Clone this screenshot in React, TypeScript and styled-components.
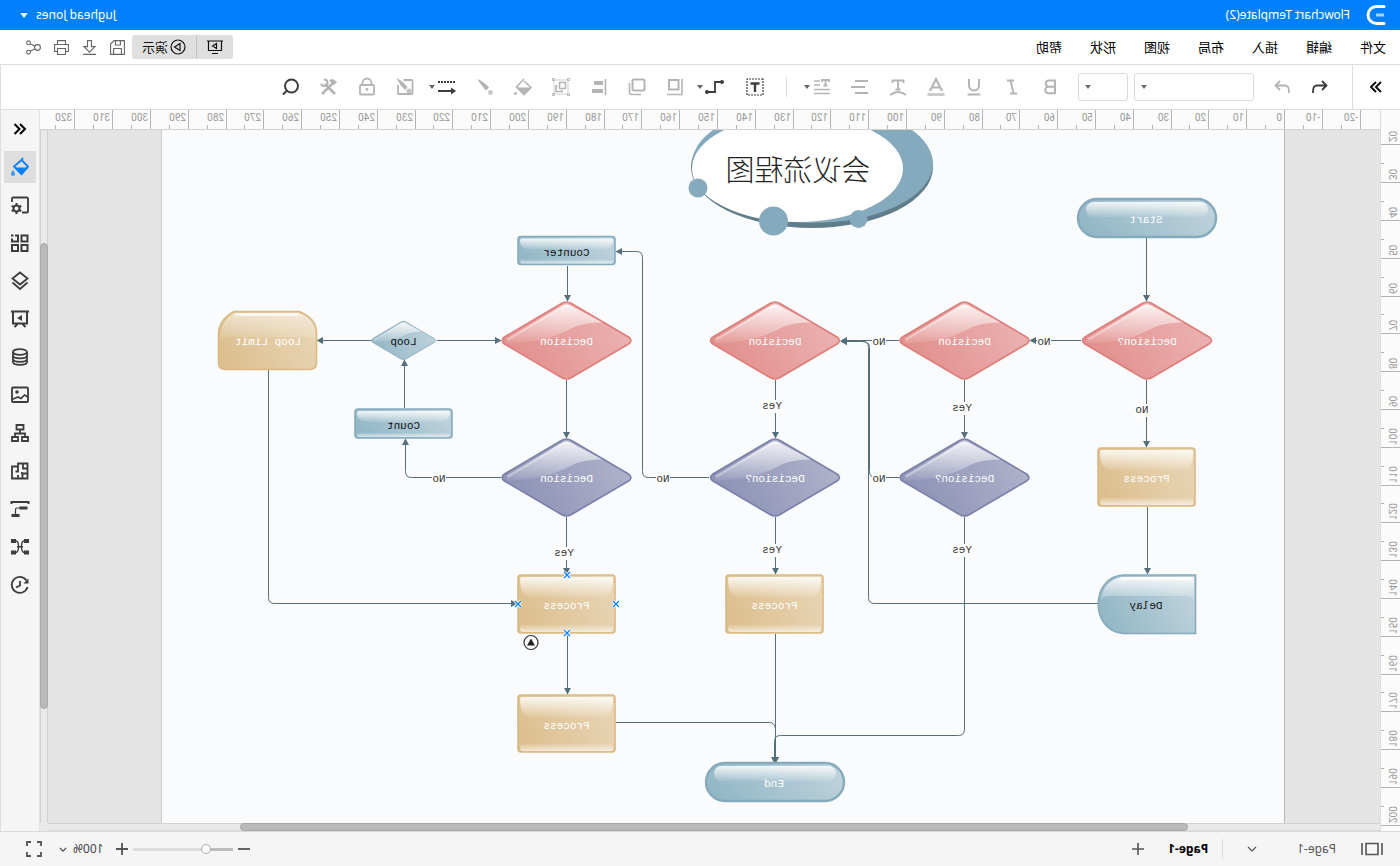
import React from "react";
import styled, { createGlobalStyle } from "styled-components";

const GlobalStyle = createGlobalStyle`
  *, *::before, *::after { box-sizing: border-box; }
  html, body { margin: 0; padding: 0; }
  body { font-family: "Noto Sans", "Noto Sans CJK SC", sans-serif; font-size: 12px; color: #111; overflow: hidden; }
  button, select, input { font: inherit; color: inherit; margin: 0; padding: 0; }
  button { border: 0; background: none; }
  svg { display: block; flex: none; }
`;

/* The whole workspace is shown as in a mirror. */
const Shell = styled.div`
  display: flex;
  flex-direction: column;
  height: 100vh;
  background: #fff;
  transform: scaleX(-1);
`;

const TitleBar = styled.header`
  display: flex;
  align-items: center;
  height: 30px;
  padding: 0 20px 0 14px;
  background: #0080ff;
  color: #fff;
`;

const DocName = styled.h1`
  margin: 0 auto 0 16px;
  font-size: 12px;
  line-height: 18px;
  font-weight: 400;
`;

const UserButton = styled.button`
  display: flex;
  align-items: center;
  gap: 8px;
  line-height: 18px;
`;

const MenuBar = styled.nav`
  display: flex;
  align-items: center;
  height: 35px;
  padding: 0 24px 0 14px;
  border-bottom: 1px solid #dedede;
`;

const MenuList = styled.div`
  display: flex;
  gap: 28px;
  margin-right: auto;
`;

const MenuItem = styled.button`
  font-size: 13px;
  line-height: 20px;
  color: #000;
  white-space: nowrap;
`;

const PresentGroup = styled.div`
  display: flex;
  height: 24px;
  margin-right: 4px;
  border-radius: 3px;
  background: #dfdfdf;
  overflow: hidden;
`;

const PresentButton = styled.button<{ $wide?: boolean }>`
  display: flex;
  align-items: center;
  justify-content: center;
  gap: 2px;
  width: ${(p) => (p.$wide ? 65 : 36)}px;
  font-size: 13px;
  line-height: 20px;
  white-space: nowrap;
  border-left: ${(p) => (p.$wide ? "1px solid #c4c4c4" : "0")};
`;

const QuickActions = styled.div`
  display: flex;
  gap: 8px;
`;

const QuickButton = styled.button`
  display: grid;
  place-items: center;
  width: 20px;
  height: 20px;
  color: #666;
`;

const ToolBar = styled.div`
  display: flex;
  align-items: center;
  height: 45px;
  border-bottom: 1px solid #dedede;
  border-right: 1px solid #dedede;
`;

const Expander = styled.button`
  display: grid;
  place-items: center;
  width: 48px;
  height: 44px;
  border-right: 1px solid #dedede;
  color: #111;
`;

const ToolGroup = styled.div<{ $before: number; $gap?: number }>`
  display: flex;
  align-items: center;
  gap: ${(p) => p.$gap ?? 14}px;
  margin-left: ${(p) => p.$before}px;
`;

const ToolButton = styled.button<{ $on?: boolean; $menu?: boolean }>`
  display: flex;
  align-items: center;
  justify-content: flex-start;
  gap: 2px;
  width: ${(p) => (p.$menu ? 34 : 24)}px;
  height: 28px;
  padding-left: 2px;
  color: ${(p) => (p.$on ? "#3c3c3c" : "#b4b4b4")};
`;

const Divider = styled.span`
  width: 1px;
  height: 20px;
  background: #dcdcdc;
`;

const SelectBox = styled.div<{ $width: number }>`
  display: grid;
  align-items: center;
  width: ${(p) => p.$width}px;
  height: 28px;
  border: 1px solid #dadada;
  border-radius: 3px;
  background: #fff;
  > * { grid-area: 1 / 1; }
  > svg { justify-self: end; margin-right: 6px; color: #707070; pointer-events: none; }
`;

const SelectInput = styled.select`
  appearance: none;
  width: 100%;
  height: 26px;
  border: 0;
  background: transparent;
  padding: 0 20px 0 8px;
`;

const Workspace = styled.main`
  flex: 1;
  min-height: 0;
  display: grid;
  grid-template-columns: 20px minmax(0, 1fr) 40px;
  grid-template-rows: minmax(0, 1fr);
`;

const RulerColumn = styled.div`
  display: grid;
  grid-template-rows: 20px minmax(0, 1fr);
  background: #fbfbfb;
  border-right: 1px solid #dcdcdc;
  overflow: hidden;
`;

const VerticalRuler = styled.div`
  grid-row: 2;
  overflow: hidden;
`;

const HorizontalRuler = styled.div`
  background: #fbfbfb;
  border-bottom: 1px solid #d2d2d2;
  overflow: hidden;
`;

const Editor = styled.div`
  display: grid;
  grid-template-columns: minmax(0, 1fr) 8px;
  grid-template-rows: 20px minmax(0, 1fr) 8px;
  background: #e9e9e9;
  ${HorizontalRuler} { grid-column: 1 / 3; }
`;

const Canvas = styled.div`
  display: flex;
  padding-left: 95px;
  background: #e4e4e4;
  overflow: hidden;
`;

const Sheet = styled.div`
  flex: none;
  width: 1124px;
  background: #f9fbfd;
  border-left: 1px solid #b8b8b8;
  border-right: 1px solid #cacaca;
`;

const ScrollTrack = styled.div<{ $vertical?: boolean }>`
  display: grid;
  background: #e9e9e9;
  ${(p) =>
    p.$vertical
      ? "grid-template-rows: 113fr 466fr 114fr; box-shadow: inset 1px 0 #d2d2d2, inset -1px 0 #d2d2d2;"
      : "grid-template-columns: 192fr 948fr 192fr; box-shadow: inset 0 1px #d2d2d2, inset 0 -1px #dadada;"}
`;

const ScrollThumb = styled.div<{ $vertical?: boolean }>`
  ${(p) => (p.$vertical ? "grid-row: 2;" : "grid-column: 2;")}
  border: 1px solid #a8a8a8;
  border-radius: 4px;
  background: #bababa;
`;

const SideBar = styled.aside`
  display: flex;
  flex-direction: column;
  align-items: center;
  gap: 6px;
  padding-top: 3px;
  background: #f5f5f5;
  border-left: 1px solid #e2e2e2;
  border-right: 1px solid #dedede;
  overflow: hidden;
`;

const SideButton = styled.button<{ $active?: boolean }>`
  display: grid;
  place-items: center;
  flex: none;
  width: 32px;
  height: 32px;
  background: ${(p) => (p.$active ? "#dedede" : "transparent")};
  color: ${(p) => (p.$active ? "#0080ff" : "#3c3c3c")};
`;

const StatusBar = styled.footer`
  display: flex;
  align-items: center;
  justify-content: space-between;
  height: 35px;
  padding: 0 26px 0 16px;
  background: #f5f5f5;
  border-top: 1px solid #dadada;
  color: #444;
`;

const StatusGroup = styled.div<{ $gap: number }>`
  display: flex;
  align-items: center;
  gap: ${(p) => p.$gap}px;
  line-height: 18px;
`;

const PageTab = styled.button<{ $current?: boolean }>`
  display: flex;
  align-items: center;
  gap: 40px;
  color: ${(p) => (p.$current ? "#000" : "#555")};
  font-weight: ${(p) => (p.$current ? 700 : 400)};
  white-space: nowrap;
`;

const IconButton = styled.button`
  display: grid;
  place-items: center;
  color: #555;
`;

const ZoomButton = styled.button`
  display: flex;
  align-items: center;
  gap: 6px;
  margin-left: 7px;
`;

const ZoomSlider = styled.input`
  appearance: none;
  width: 100px;
  height: 12px;
  background: linear-gradient(#bcbcbc, #bcbcbc) 0 5px / 26px 3px no-repeat,
    linear-gradient(#dcdcdc, #dcdcdc) 0 5px / 100% 3px no-repeat;
  &::-webkit-slider-thumb {
    appearance: none;
    width: 10px;
    height: 10px;
    border: 1px solid #aaa;
    border-radius: 50%;
    background: #fff;
  }
`;

/* ---------- icons ---------- */

type IconProps = { w?: number; h?: number; box?: string; sw?: number; children: React.ReactNode };

const Icon = ({ w = 20, h = 20, box = "0 0 20 20", sw = 2, children }: IconProps) => (
  <svg width={w} height={h} viewBox={box} fill="none" stroke="currentColor" strokeWidth={sw} aria-hidden="true">
    {children}
  </svg>
);

const Caret = ({ wide }: { wide?: boolean }) => (
  <svg width={wide ? 8 : 6} height={wide ? 5 : 4} viewBox="0 0 6 4" aria-hidden="true">
    <path d="M0 0h6L3 4z" fill="currentColor" />
  </svg>
);

const DarkCaret = styled.span`
  color: #666;
`;

const solid = { fill: "currentColor", stroke: "none" };

const textTools: { name: string; icon: React.ReactNode; menu?: boolean }[] = [
  { name: "Bold", icon: <path d="M5 3.5h6a3 3 0 0 1 0 6.200H5zM5 9.700h6.500a3.300 3.300 0 0 1 0 6.600H5z" /> },
  { name: "Italic", icon: <path d="M8 3.500h7M5 16.500h7M11.500 3.500l-3 13" strokeWidth="1.800" /> },
  { name: "Underline", icon: <path d="M5 2v6.500a5 5 0 0 0 10 0V2M3.500 17.500h13" /> },
  {
    name: "Font colour",
    icon: (
      <>
        <path d="M4 14L10 2l6 12M6 10.500h8" />
        <path d="M1.500 17.500h17" strokeWidth="3" opacity=".7" />
      </>
    ),
  },
  { name: "Text on path", icon: <path d="M4.500 6V3.500h11V6M10 3.500V12M7.500 12.500h5M2 18q8-6 16 0" strokeWidth="1.800" /> },
  { name: "Align text", icon: <path d="M2 4h13M5 10h14M2 16h13" /> },
  {
    name: "Line spacing",
    menu: true,
    icon: (
      <>
        <path d="M3 5V3h7v2M6.500 3v6M4.500 8.500h4" strokeWidth="1.800" />
        <path d="M12 4h6M12 8h6M2 12.500h16M2 16.500h16" strokeWidth="1.500" />
      </>
    ),
  },
];

const insertTools: typeof textTools = [
  {
    name: "Text box",
    icon: (
      <>
        <rect x="2" y="2" width="16" height="16" strokeDasharray="2 1" strokeWidth="1.200" />
        <path d="M5.500 6.500h9M10 6.500V15" strokeWidth="2.400" />
      </>
    ),
  },
  {
    name: "Connector",
    menu: true,
    icon: (
      <>
        <path d="M2 5h8v10h7" strokeWidth="1.800" />
        <circle cx="3" cy="5" r="2" {...solid} />
        <circle cx="18" cy="15" r="2" {...solid} />
      </>
    ),
  },
];

const arrangeTools: typeof textTools = [
  { name: "Position", icon: <><rect x="6.500" y="3" width="9.500" height="9.500" /><path d="M3 2v15.500h15" strokeWidth="1.600" /></> },
  { name: "Order", icon: <><rect x="2.500" y="2.500" width="12" height="11" rx="1.500" /><path d="M6 17.500h9.500a2 2 0 0 0 2-2V6" strokeWidth="1.600" /></> },
  { name: "Align", icon: <><path d="M3.500 2v16" strokeWidth="1.600" /><path d="M6 6h9M6 14h11" strokeWidth="4" /></> },
  {
    name: "Group",
    icon: (
      <>
        <path d="M3 3h14v14H3z" strokeWidth="1" opacity=".6" />
        <path d="M1.500 1.500h2v2h-2zM16.500 1.500h2v2h-2zM1.500 16.500h2v2h-2zM16.500 16.500h2v2h-2z" strokeWidth="1" fill="#fff" />
        <path d="M5.500 5.500h6v6h-6zM13.500 9h1.500v5.500H9V13" strokeWidth="1.600" />
      </>
    ),
  },
  {
    name: "Fill",
    icon: (
      <>
        <path d="M9 2l7.500 8L9 17.500 2 10.500 9 4" strokeWidth="1.600" />
        <path d="M2 10.500h14.500L9 18z" {...solid} />
        <circle cx="17.500" cy="16.500" r="1.500" {...solid} />
      </>
    ),
  },
  {
    name: "Brush",
    icon: (
      <>
        <path d="M2.500 2Q3 4 11 13.500l3-3Q8 4 2.500 2z" {...solid} transform="matrix(-1 0 0 1 20 0)" />
        <circle cx="4.500" cy="15.500" r="2.500" {...solid} opacity=".7" />
      </>
    ),
  },
  {
    name: "Line style",
    menu: true,
    icon: (
      <>
        <path d="M2 5h17" strokeDasharray="2 1" />
        <path d="M4 14h15" />
        <path d="M1 14l5-3.500v7z" {...solid} />
      </>
    ),
  },
];

const moreTools: typeof textTools = [
  {
    name: "No picture",
    icon: (
      <>
        <path d="M11.500 3H3.500a1 1 0 0 0-1 1v12a1 1 0 0 0 1 1h12.500a1 1 0 0 0 1-1V8" strokeWidth="1.800" />
        <path d="M18.500 1Q12 4 7.500 10.500l2.500 2.500Q15.500 8 18.500 1z" {...solid} />
        <circle cx="6" cy="14" r="2.500" {...solid} opacity=".8" />
      </>
    ),
  },
  { name: "Lock", icon: <><rect x="3" y="8" width="14" height="9.500" rx="1" strokeWidth="1.800" /><path d="M5.500 8V6a4.500 4.500 0 0 1 9 0v2" strokeWidth="1.800" /><circle cx="10" cy="12.500" r="1.400" {...solid} /></> },
  {
    name: "Tools",
    icon: (
      <>
        <path d="M4 17L14 7M6 6l11 11" strokeWidth="2.600" />
        <path d="M2 5l4-3 4 1-3 4-2 1z" {...solid} />
        <path d="M15 2.500a3.200 3.200 0 1 0 2.800 4" strokeWidth="2" />
      </>
    ),
  },
];

const sideTools: { name: string; icon: React.ReactNode }[] = [
  {
    name: "Fill",
    icon: (
      <>
        <path d="M7 1l2 3M8.500 3L2 9.500 8.500 17 16 9.500 8.500 3" strokeWidth="1.800" />
        <path d="M1.500 10.500h14.500L8.500 18.500z" {...solid} />
        <path d="M17 13q2 3 2 4a2 2 0 0 1-4 0q0-1 2-4z" {...solid} opacity=".75" />
      </>
    ),
  },
  {
    name: "Shape settings",
    icon: (
      <>
        <path d="M8 17.500H3a1 1 0 0 1-1-1v-13a1 1 0 0 1 1-1h14a1 1 0 0 1 1 1V7" strokeWidth="1.800" />
        <circle cx="13.500" cy="13.500" r="3" strokeWidth="2" />
        <path d="M13.500 8v2M13.500 17v2M8.700 10.800l1.700 1M16.600 15.200l1.700 1M8.700 16.200l1.700-1M16.600 11.800l1.700-1" />
      </>
    ),
  },
  { name: "Symbols", icon: <><path d="M2.500 2.500h6v6h-6zM2.500 12h6v6h-6zM12 12h6v6h-6z" /><path d="M15 2.500h-3v6h6V5.500" /><path d="M16.500 2.500H19" /></> },
  { name: "Layers", icon: <path d="M10 1.500l7.500 6L10 13.500 2.500 7.500zM2.500 11.500L10 18l7.500-6.500" strokeWidth="1.800" /> },
  { name: "Slides", icon: <><path d="M1 2.500h18M3 3v11.500h14V3M7.500 15l-3 3M12.500 15l3 3" strokeWidth="2" /><path d="M8 6l5 3-5 3z" {...solid} /></> },
  { name: "Data", icon: <><ellipse cx="10" cy="5" rx="7" ry="2.800" strokeWidth="1.800" /><path d="M3 5v10c0 3.700 14 3.700 14 0V5M3 8.500c0 3.700 14 3.700 14 0M3 12c0 3.700 14 3.700 14 0" strokeWidth="1.800" /></> },
  { name: "Pictures", icon: <><rect x="2" y="2.500" width="16" height="14.500" rx="1" strokeWidth="1.800" /><circle cx="13" cy="7" r="1.800" {...solid} /><path d="M2 12l3.500-2 3.500 3.500 3-1.500 2.500 1L18 14.500" strokeWidth="1.600" /></> },
  { name: "Org chart", icon: <path d="M6.500 2h7v4.500h-7zM2 14h6v4H2zM12 14h6v4h-6zM10 6.500V10M5 13.500V10.500h10v3" strokeWidth="1.800" /> },
  { name: "Floor plan", icon: <path d="M2.500 2.500h9.500v3h6v12H2.500zM2.500 7.500h4.500v-5M12 6v4.500h2.500M8 11v2.500M2.500 12.500h5v5M12 17.500v-3.500" strokeWidth="1.800" /> },
  { name: "Gantt", icon: <><path d="M1.500 5V3h17v2" strokeWidth="2" /><path d="M2.500 9h8M10.500 16.500h8" strokeWidth="3" /><path d="M9 9h4q1.500 0 1.500 1.500V16" strokeWidth="1.200" /></> },
  { name: "Mind map", icon: <><path d="M1 4h5M14 4h5M1 15.500h5M14 15.500h5" strokeWidth="4" /><path d="M6 4q2.500 0 2.500 5.500T6 15.500M14 4q-2.500 0-2.500 5.500t2.500 6M7 9.700h6" strokeWidth="1.400" /></> },
  { name: "History", icon: <><path d="M3.500 5.500A8 8 0 1 1 2.500 12" strokeWidth="1.800" /><path d="M1.500 3.500v5h5z" {...solid} /><path d="M10 6v4.500l4 2" strokeWidth="1.800" /></> },
];

const quickTools: { name: string; icon: React.ReactNode }[] = [
  { name: "Save", icon: <path d="M.600 .600h10.400l3.400 3.400v10.400H.600zM3.600 14.400V8.500h7.800v5.900M4.600.600v4.400h5V.600" /> },
  { name: "Download", icon: <path d="M5.500 .600h4v6h3.500l-5.500 5.500-5.500-5.500h3.500zM1 14.400h13" /> },
  { name: "Print", icon: <path d="M3.500 4.500V.600h8v3.900M3.500 11.500H.600v-7h13.800v7h-2.900M3.500 8.500h8v6h-8z" /> },
  { name: "Share", icon: <><circle cx="3.500" cy="7.500" r="2.900" /><circle cx="12.500" cy="2.800" r="1.900" /><circle cx="12.500" cy="12.200" r="1.900" /><path d="M6 6.200l4.800-2.500M6 8.800l4.800 2.500" /></> },
];

/* ---------- rulers ---------- */

const PITCH = 37.8;

const TopRuler = () => (
  <svg width="100%" height="19" aria-hidden="true">
    {Array.from({ length: 35 }, (_, i) => i - 2).map((n) => {
      const x = Math.round(96 + n * PITCH);
      return (
        <g key={n}>
          <path d={`M${x - 0.5} 0V19`} stroke="#b4b4b4" />
          <path d={`M${x + 18.5} 15V19`} stroke="#b4b4b4" />
          <text x={x + 2} y="11" fontSize="10" fill="#999" fontFamily="Roboto, sans-serif">{n * 10}</text>
        </g>
      );
    })}
  </svg>
);

const LeftRuler = () => (
  <svg width="19" height="100%" aria-hidden="true">
    {Array.from({ length: 19 }, (_, i) => i + 2).map((n) => {
      const y = Math.round(90 + (n - 4) * PITCH);
      return (
        <g key={n}>
          <path d={`M0 ${y + 0.5}H19`} stroke="#b4b4b4" />
          <path d={`M16 ${y - 18.5}H19`} stroke="#b4b4b4" />
          <text transform={`translate(11 ${y - 2}) rotate(-90)`} fontSize="10" fill="#999" fontFamily="Roboto, sans-serif">{n * 10}</text>
        </g>
      );
    })}
  </svg>
);

/* ---------- diagram ---------- */

type Tone = "blue" | "red" | "violet" | "tan";

const tones: Record<Tone, { from: string; to: string; line: string }> = {
  blue: { from: "#bfd3dc", to: "#93b7c6", line: "#85aabd" },
  red: { from: "#ebb3b3", to: "#e18e8b", line: "#de7e7b" },
  violet: { from: "#b0b3cb", to: "#8c90b4", line: "#7b80a9" },
  tan: { from: "#e8d5b5", to: "#dcbf8e", line: "#dab983" },
};

const Label = styled.text`
  font-family: "Liberation Mono", monospace;
  font-size: 11px;
  text-anchor: middle;
`;

const Caption = ({ x, y, text, dark }: { x: number; y: number; text: string; dark?: boolean }) => (
  <Label x={x} y={y + 4} fill={dark ? "#111" : "#fff"}>{text}</Label>
);

const Diamond = ({ x, y, tone, text, small }: { x: number; y: number; tone: Tone; text: string; small?: boolean }) => (
  <g>
    <g transform={`translate(${x} ${y})${small ? " scale(.5)" : ""}`}>
      <path
        d="M-62-3.500L-5-37Q0-40 5-37L62-3.500Q67 0 62 3.500L5 37Q0 40-5 37L-62 3.500Q-67 0-62-3.500z"
        fill={`url(#${tone})`}
        stroke={tones[tone].line}
        strokeWidth="1.600"
      />
      <path d="M60-1L4-35Q0-37-4-35L-36-18Q-20-18-9-14Q10-4 24-1Q46 3 60 3z" fill="url(#gloss)" />
      <path d="M60-2L3-36Q0-38-3-36L-8-33Q0-34 6-31L58 0z" fill="#fff" opacity=".3" />
    </g>
    <Caption x={x} y={y} text={text} dark={small} />
  </g>
);

const Box = ({ x, y, w = 97, h = 58, tone, text, dark }: { x: number; y: number; w?: number; h?: number; tone: Tone; text: string; dark?: boolean }) => {
  const g = h > 40 ? 18 : 9;
  const foot = h > 40 ? 7 : 4;
  return (
    <g>
      <rect x={x} y={y} width={w} height={h} rx="3" fill={`url(#${tone})`} stroke={tones[tone].line} strokeWidth="1.600" />
      <path d={`M${x + 2} ${y + 4}q0-2 2-2h${w - 8}q2 0 2 2q0 ${g}-12 ${g}h${28 - w}q-12 0-12-${g}z`} fill="url(#gloss)" />
      <rect x={x + 2} y={y + h - foot - 1} width={w - 4} height={foot} rx="3" fill="url(#foot)" />
      <Caption x={x + w / 2} y={y + h / 2 + 1} text={text} dark={dark} />
    </g>
  );
};

const Pill = ({ x, y, text }: { x: number; y: number; text: string }) => (
  <g>
    <rect x={x} y={y} width="138" height="38" rx="19" fill="url(#blue)" stroke={tones.blue.line} strokeWidth="2.400" />
    <rect x={x + 8} y={y + 3} width="122" height="15" rx="7.500" fill="url(#gloss)" />
    <Caption x={x + 70} y={y + 20} text={text} />
  </g>
);

const Wire = ({ d }: { d: string }) => (
  <path d={d} fill="none" stroke="#546e7a" markerEnd="url(#arrow)" />
);

const WireLabel = ({ x, y, text }: { x: number; y: number; text: string }) => {
  const w = text.length * 7;
  return (
    <g>
      <rect x={x - w / 2} y={y - 6} width={w} height="13" fill="#fff" />
      <Label x={x} y={y + 3} fill="#333">{text}</Label>
    </g>
  );
};

const wires = [
  "M253.500 238V301",
  "M253.500 380V447",
  "M252.500 507V574",
  "M319 340.500H370",
  "M501 340.500H559",
  "M302 603.500H525.500Q531.500 603.500 531.500 597.500V347.500Q531.500 341.500 537.500 341.500H559",
  "M501 477.500H524Q530.500 477.500 530.500 471.500V347.500Q530.500 341.500 537.500 341.500H559",
  "M435.500 380V438",
  "M435.500 517V729.500Q435.500 735.500 441.500 735.500H619.500Q625.500 735.500 625.500 741.500V763",
  "M624.500 380V438",
  "M624.500 517V574",
  "M624.500 634V763",
  "M691 477.500H751.500Q757.500 477.500 757.500 471.500V257.500Q757.500 251.500 763.500 251.500H784",
  "M832.500 266V301",
  "M833.500 380V438",
  "M833.500 517V574",
  "M832.500 634V694",
  "M784 722.500H630.500Q625.500 722.500 624.500 728.500V763",
  "M899 477.500H988.500Q994.500 477.500 994.500 471.500V439",
  "M995.500 408V360",
  "M963 340.500H899",
  "M1029 340.500H1083",
  "M1131.500 370V597.500Q1131.500 603.500 1125.500 603.500H883",
];

const wireLabels: [number, number, string][] = [
  [258, 410, "No"], [356, 342, "No"], [521, 342, "No"], [438, 408, "Yes"], [521, 479, "No"],
  [438, 550, "Yes"], [628, 406, "Yes"], [628, 550, "Yes"], [737, 479, "No"], [836, 553, "Yes"], [961, 479, "No"],
];

const handles: [number, number][] = [[833, 575], [784, 604], [833, 633], [882, 604]];

const Flowchart = () => (
  <svg width="1122" height="693" viewBox="116 130 1122 693" role="img" aria-label="会议流程图">
    <defs>
      {(Object.keys(tones) as Tone[]).map((t) => (
        <linearGradient key={t} id={t} x1="0" y1=".3" x2="1" y2=".6">
          <stop offset="0" stopColor={tones[t].from} />
          <stop offset="1" stopColor={tones[t].to} />
        </linearGradient>
      ))}
      <linearGradient id="gloss" x1="0" y1="0" x2="0" y2="1">
        <stop offset="0" stopColor="#fff" stopOpacity=".85" />
        <stop offset="1" stopColor="#fff" stopOpacity=".08" />
      </linearGradient>
      <linearGradient id="foot" x1="0" y1="0" x2="0" y2="1">
        <stop offset="0" stopColor="#fff" stopOpacity=".1" />
        <stop offset="1" stopColor="#fff" stopOpacity=".65" />
      </linearGradient>
      <marker id="arrow" markerUnits="userSpaceOnUse" markerWidth="8" markerHeight="8" refX="6" refY="4" orient="auto">
        <path d="M0 .5L6.500 4L0 7.500z" fill="#546e7a" />
      </marker>
    </defs>

    <ellipse cx="588" cy="167" rx="121" ry="61" fill="#607d8b" />
    <ellipse cx="587.500" cy="163.500" rx="120.500" ry="59.500" fill="#85aabd" />
    <ellipse cx="602.500" cy="168.500" rx="105.500" ry="53.500" fill="#fff" />
    <circle cx="702" cy="188" r="9.500" fill="#85aabd" />
    <circle cx="626.500" cy="221" r="14.500" fill="#85aabd" />
    <circle cx="541.500" cy="219" r="9" fill="#85aabd" />
    <text x="602" y="181" fontSize="29" fontWeight="300" textAnchor="middle" fill="#222" fontFamily="'Noto Sans CJK SC', sans-serif">会议流程图</text>

    {wires.map((d) => <Wire key={d} d={d} />)}
    {wireLabels.map(([x, y, t]) => <WireLabel key={`${x}-${y}`} x={x} y={y} text={t} />)}

    <Pill x={184} y={199} text="Start" />
    <Pill x={556} y={763} text="End" />
    <Diamond x={253} y={340.5} tone="red" text="Decision?" />
    <Diamond x={435.5} y={340.5} tone="red" text="Decision" />
    <Diamond x={625} y={340.5} tone="red" text="Decision" />
    <Diamond x={833.5} y={340.5} tone="red" text="Decision" />
    <Diamond x={435.5} y={477.5} tone="violet" text="Decision?" />
    <Diamond x={625} y={477.5} tone="violet" text="Decision?" />
    <Diamond x={833.5} y={477.5} tone="violet" text="Decision" />
    <Diamond x={996.5} y={340.5} tone="blue" text="Loop" small />
    <Box x={205} y={448} tone="tan" text="Process" />
    <Box x={577} y={575} tone="tan" text="Process" />
    <Box x={785} y={575} tone="tan" text="Process" />
    <Box x={785} y={695} h={57} tone="tan" text="Process" />
    <Box x={785} y={236.5} h={28} tone="blue" text="Counter" dark />
    <Box x={948} y={409} h={29} tone="blue" text="Count" dark />

    <path d="M204.500 575H277C310 577 310 631 277 633.500H204.500z" fill="url(#blue)" stroke={tones.blue.line} strokeWidth="1.600" />
    <path d="M206 577H277Q298 580 299 602Q298 596 292 596H214Q206 596 206 602z" fill="url(#gloss)" />
    <rect x="207" y="577" width="73" height="3" rx="1.500" fill="#fff" opacity=".7" />
    <Caption x={254} y={605} text="Delay" dark />

    <path d="M1101 311.500H1166Q1182 320 1181.500 336V363Q1181.500 369.500 1175 369.500H1090Q1083.500 369.500 1083.500 363V332Q1084 318 1101 311.500z" fill="url(#tan)" stroke={tones.tan.line} strokeWidth="1.600" />
    <path d="M1101 313H1166Q1181 322 1180 342Q1179 337 1173 337H1092Q1085 337 1085 342V332Q1086 319 1101 313z" fill="url(#gloss)" opacity=".6" />
    <rect x="1101" y="313" width="64" height="3" rx="1.500" fill="#fff" opacity=".7" />
    <Caption x={1132} y={341} text="Loop Limit" />

    {handles.map(([x, y]) => (
      <g key={`${x}-${y}`} fill="none">
        <path d={`M${x - 3} ${y - 3}l6 6m0-6l-6 6`} stroke="#fff" strokeWidth="3" />
        <path d={`M${x - 3} ${y - 3}l6 6m0-6l-6 6`} stroke="#0080ff" strokeWidth="1.200" />
      </g>
    ))}
    <circle cx="869" cy="642.500" r="7" fill="#fff" stroke="#333" strokeWidth="1.200" />
    <path d="M869 638.500l4 7h-8z" fill="#222" />
  </svg>
);

const Tools = ({ list, on }: { list: typeof textTools; on?: boolean }) => (
  <>
    {list.map((t) => (
      <ToolButton key={t.name} type="button" aria-label={t.name} $menu={t.menu} $on={on || t.name === "Line style"}>
        <Icon>{t.icon}</Icon>
        {t.menu && <DarkCaret><Caret /></DarkCaret>}
      </ToolButton>
    ))}
  </>
);

const menus = ["文件", "编辑", "插入", "布局", "视图", "形状", "帮助"];

export default function App() {
  return (
    <>
      <GlobalStyle />
      <Shell>
        <TitleBar>
          <Icon sw={3}>
            <path d="M2 1.500h7.500a8.500 8.500 0 0 1 0 17H2" strokeLinecap="round" />
            <path d="M2 10h8" opacity=".65" />
          </Icon>
          <DocName>Flowchart Template(2)</DocName>
          <UserButton type="button">Jughead Jones <Caret wide /></UserButton>
        </TitleBar>

        <MenuBar>
          <MenuList>
            {menus.map((m) => <MenuItem key={m} type="button">{m}</MenuItem>)}
          </MenuList>
          <PresentGroup>
            <PresentButton type="button" aria-label="Slide show">
              <Icon w={16} h={16} box="0 0 16 16" sw={1.2}>
                <path d="M0 2h16M1.500 2v9.500h13V2M5 14.500h6M6.500 4.500l4 2.500-4 2.500z" />
              </Icon>
            </PresentButton>
            <PresentButton type="button" $wide>
              <Icon w={16} h={16} box="0 0 16 16" sw={1.2}>
                <circle cx="8" cy="8" r="7" />
                <path d="M6 4.500L11.500 8 6 11.500z" />
              </Icon>
              演示
            </PresentButton>
          </PresentGroup>
          <QuickActions>
            {quickTools.map((q) => (
              <QuickButton key={q.name} type="button" aria-label={q.name}>
                <Icon w={15} h={15} box="0 0 15 15" sw={1.1}>{q.icon}</Icon>
              </QuickButton>
            ))}
          </QuickActions>
        </MenuBar>

        <ToolBar>
          <Expander type="button" aria-label="Expand library">
            <Icon w={12} h={12} box="0 0 12 12">
              <path d="M1 1l5 5-5 5M6 1l5 5-5 5" />
            </Icon>
          </Expander>
          <ToolGroup $before={20}>
            <ToolButton type="button" aria-label="Undo" $on>
              <Icon sw={1.8}><path d="M8 4L3.500 8.500 8 13M3.500 8.500H13q4 0 4 6V16" /></Icon>
            </ToolButton>
            <ToolButton type="button" aria-label="Redo">
              <Icon sw={1.8}><path d="M12 4l4.500 4.500L12 13M16.500 8.500H7q-4 0-4 6V16" /></Icon>
            </ToolButton>
          </ToolGroup>
          <ToolGroup $before={16} $gap={6}>
            <SelectBox $width={120}><SelectInput aria-label="Font"><option /></SelectInput><Caret /></SelectBox>
            <SelectBox $width={50}><SelectInput aria-label="Font size"><option /></SelectInput><Caret /></SelectBox>
          </ToolGroup>
          <ToolGroup $before={16}><Tools list={textTools} /></ToolGroup>
          <ToolGroup $before={13}><Divider /></ToolGroup>
          <ToolGroup $before={19} $gap={16}><Tools list={insertTools} on /></ToolGroup>
          <ToolGroup $before={6}><Tools list={arrangeTools} /></ToolGroup>
          <ToolGroup $before={8}>
            <Tools list={moreTools} />
            <ToolButton type="button" aria-label="Search" $on>
              <Icon><circle cx="9.500" cy="9" r="6.500" /><path d="M14 13.500l4 4" /></Icon>
            </ToolButton>
          </ToolGroup>
        </ToolBar>

        <Workspace>
          <RulerColumn>
            <VerticalRuler><LeftRuler /></VerticalRuler>
          </RulerColumn>
          <Editor>
            <HorizontalRuler><TopRuler /></HorizontalRuler>
            <Canvas><Sheet><Flowchart /></Sheet></Canvas>
            <ScrollTrack $vertical><ScrollThumb $vertical /></ScrollTrack>
            <ScrollTrack><ScrollThumb /></ScrollTrack>
          </Editor>
          <SideBar>
            <SideButton type="button" aria-label="Collapse panel">
              <Icon w={14} h={14} box="0 0 14 14"><path d="M7 2L2 7l5 5M12.500 2l-5 5 5 5" stroke="#000" /></Icon>
            </SideButton>
            {sideTools.map((s, i) => (
              <SideButton key={s.name} type="button" aria-label={s.name} $active={i === 0}>
                <Icon>{s.icon}</Icon>
              </SideButton>
            ))}
          </SideBar>
        </Workspace>

        <StatusBar>
          <StatusGroup $gap={24}>
            <IconButton type="button" aria-label="Page layout">
              <Icon w={24} h={16} box="0 0 24 16" sw={1.6}><path d="M2 2v12M22 2v12M6 2.500h12v11H6z" /></Icon>
            </IconButton>
            <PageTab type="button">
              Page-1
              <Icon w={10} h={6} box="0 0 10 6" sw={1.2}><path d="M1 1l4 4 4-4" /></Icon>
            </PageTab>
            <StatusGroup $gap={14}>
              <Divider />
              <PageTab type="button" $current>Page-1</PageTab>
            </StatusGroup>
            <IconButton type="button" aria-label="Add page">
              <Icon w={12} h={12} box="0 0 12 12" sw={1.6}><path d="M6 0v12M0 6h12" /></Icon>
            </IconButton>
          </StatusGroup>
          <StatusGroup $gap={5}>
            <IconButton type="button" aria-label="Zoom out">
              <Icon w={12} h={12} box="0 0 12 12" sw={1.8}><path d="M0 6h12" /></Icon>
            </IconButton>
            <ZoomSlider type="range" aria-label="Zoom" min={0} max={100} defaultValue={24} />
            <IconButton type="button" aria-label="Zoom in">
              <Icon w={12} h={12} box="0 0 12 12" sw={1.8}><path d="M6 0v12M0 6h12" /></Icon>
            </IconButton>
            <ZoomButton type="button">
              100%
              <Icon w={8} h={5} box="0 0 10 6" sw={1.4}><path d="M1 1l4 4 4-4" /></Icon>
            </ZoomButton>
            <IconButton type="button" aria-label="Full screen">
              <Icon w={28} h={16} box="-12 0 28 16" sw={1.8}><path d="M1 5V1h4M11 1h4v4M15 11v4h-4M5 15H1v-4" /></Icon>
            </IconButton>
          </StatusGroup>
        </StatusBar>
      </Shell>
    </>
  );
}
